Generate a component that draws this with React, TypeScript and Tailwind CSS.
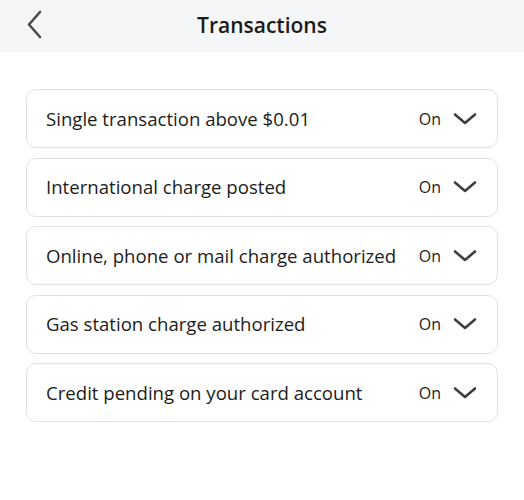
const ALERTS = [
  "Single transaction above $0.01",
  "International charge posted",
  "Online, phone or mail charge authorized",
  "Gas station charge authorized",
  "Credit pending on your card account",
];

function Chevron() {
  return (
    <svg width="24" height="14" viewBox="0 0 24 14" fill="none">
      <path d="M2 2.5 L12 11 L22 2.5" stroke="#3f3f3f" strokeWidth="2.6" strokeLinecap="round" strokeLinejoin="round" />
    </svg>
  );
}

export default function App() {
  return (
    <div className="w-[524px] h-[500px] bg-white text-[#1c1c1c]" style={{ fontFamily: '"Open Sans", sans-serif' }}>
      <div className="relative h-[52px] bg-[#f5f6f8] flex items-center justify-center">
        <button className="absolute left-[25px] top-[10px]">
          <svg width="20" height="30" viewBox="0 0 20 30" fill="none">
            <path d="M15 2 L4 14.5 L15 27" stroke="#4a4a4a" strokeWidth="2.6" strokeLinecap="round" strokeLinejoin="round" />
          </svg>
        </button>
        <h1 className="text-[21px] font-semibold text-[#1a1a1a]">Transactions</h1>
      </div>

      <div className="px-[26px] pt-[37px] flex flex-col gap-[9.5px]">
        {ALERTS.map((label) => (
          <div
            key={label}
            className="h-[59px] border border-[#e2e2e2] rounded-[10px] flex items-center pl-[19px] pr-[20px]"
          >
            <span className="flex-1 text-[18.6px]">{label}</span>
            <span className="text-[16px] mr-[12px]">On</span>
            <Chevron />
          </div>
        ))}
      </div>
    </div>
  );
}
